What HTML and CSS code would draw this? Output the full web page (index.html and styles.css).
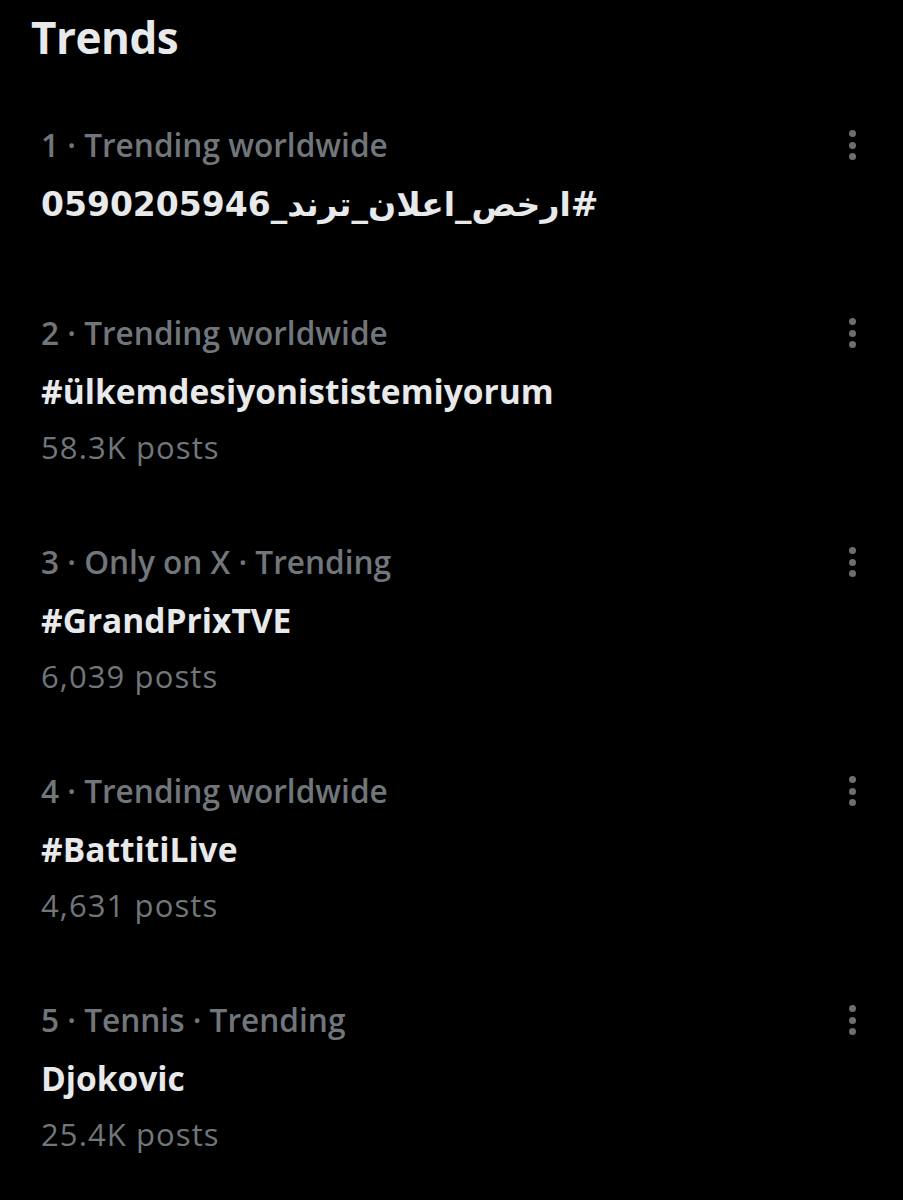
FILE: index.html
```html
<!DOCTYPE html>
<html lang="en">
<head>
<meta charset="utf-8">
<title>Trends</title>
<link rel="stylesheet" href="styles.css">
</head>
<body>
<main class="panel">
  <h1 class="panel__title">Trends</h1>
  <ul class="trends">
    <li class="trend trend--no-count">
      <div class="trend__body">
        <div class="trend__meta">1 · Trending worldwide</div>
        <div class="trend__name"><span class="trend__rtl" dir="rtl">#ارخص_اعلان_ترند_0590205946</span></div>
      </div>
      <button class="trend__more" aria-label="More"><span></span><span></span><span></span></button>
    </li>
    <li class="trend">
      <div class="trend__body">
        <div class="trend__meta">2 · Trending worldwide</div>
        <div class="trend__name">#ülkemdesiyonististemiyorum</div>
        <div class="trend__count">58.3K posts</div>
      </div>
      <button class="trend__more" aria-label="More"><span></span><span></span><span></span></button>
    </li>
    <li class="trend">
      <div class="trend__body">
        <div class="trend__meta">3 · Only on X · Trending</div>
        <div class="trend__name">#GrandPrixTVE</div>
        <div class="trend__count">6,039 posts</div>
      </div>
      <button class="trend__more" aria-label="More"><span></span><span></span><span></span></button>
    </li>
    <li class="trend">
      <div class="trend__body">
        <div class="trend__meta">4 · Trending worldwide</div>
        <div class="trend__name">#BattitiLive</div>
        <div class="trend__count">4,631 posts</div>
      </div>
      <button class="trend__more" aria-label="More"><span></span><span></span><span></span></button>
    </li>
    <li class="trend">
      <div class="trend__body">
        <div class="trend__meta">5 · Tennis · Trending</div>
        <div class="trend__name">Djokovic</div>
        <div class="trend__count">25.4K posts</div>
      </div>
      <button class="trend__more" aria-label="More"><span></span><span></span><span></span></button>
    </li>
  </ul>
</main>
</body>
</html>
```
FILE: styles.css
```css
* { box-sizing: border-box; }
html, body {
  margin: 0;
  background: #000;
}
body {
  font-family: "Open Sans", "Noto Sans", "DejaVu Sans", sans-serif;
  color: #e7e9ea;
}
.panel {
  width: 903px;
  min-height: 1200px;
  padding: 0 0 0 33px;
}
.panel__title {
  margin: 0 0 14px -2px;
  font-size: 44px;
  line-height: 74px;
  font-weight: 700;
  color: #e7e9ea;
  letter-spacing: -0.5px;
}
.trends {
  list-style: none;
  margin: 0;
  padding: 0;
}
.trend {
  display: flex;
  justify-content: space-between;
  align-items: flex-start;
  padding: 28px 45px 32px 8px;
}
.trend--no-count {
  padding-bottom: 42px;
}
.trend__body {
  display: flex;
  flex-direction: column;
}
.trend__meta {
  font-size: 31.6px;
  line-height: 58px;
  font-weight: 600;
  color: #71767b;
}
.trend__name {
  font-size: 33.5px;
  line-height: 59px;
  font-weight: 700;
  color: #e7e9ea;
}
.trend__rtl {
  font-family: "DejaVu Sans", "Noto Sans", sans-serif;
  font-size: 33px;
}
.trend__count {
  font-size: 31px;
  line-height: 52px;
  font-weight: 400;
  letter-spacing: 1.1px;
  color: #71767b;
}
.trend__more {
  display: flex;
  flex-direction: column;
  align-items: center;
  gap: 4.7px;
  margin-top: 14px;
  padding: 0;
  width: 12px;
  background: none;
  border: 0;
}
.trend__more span {
  display: block;
  width: 7px;
  height: 7px;
  border-radius: 50%;
  background: #6e6e70;
}
```
